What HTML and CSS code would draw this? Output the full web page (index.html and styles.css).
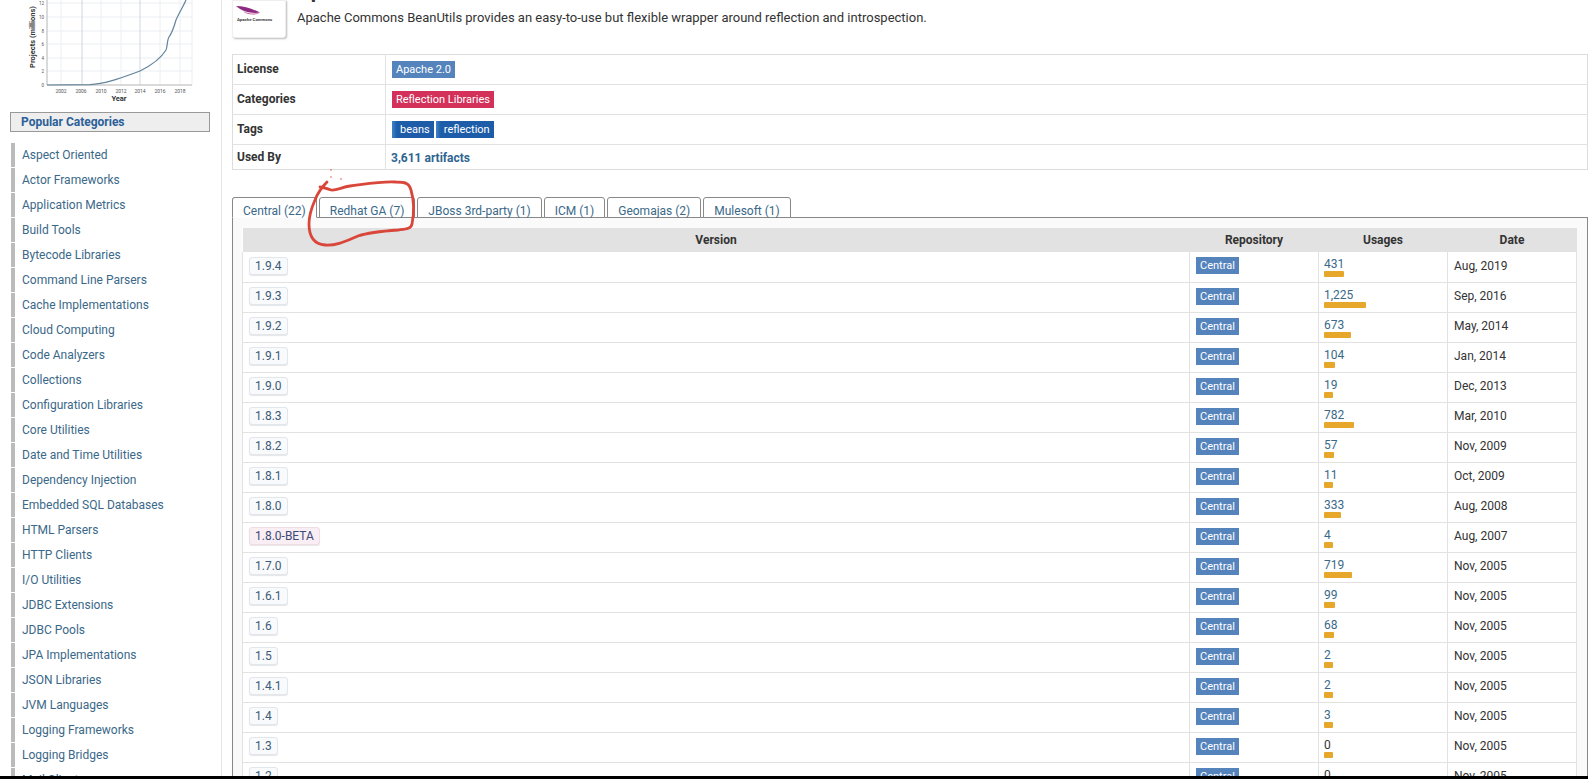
FILE: index.html
```html
<!DOCTYPE html>
<html lang="en">
<head>
<meta charset="utf-8">
<title>Apache Commons BeanUtils</title>
<link rel="stylesheet" href="styles.css">
</head>
<body>
<div class="page">
  <aside class="sidebar">
    <svg class="chart" width="200" height="104" viewBox="0 0 200 104">
      <g class="grid">
        <path d="M47 71H192M47 58H192M47 44H192M47 31H192M47 17H192M47 3H192M61 0V85M101 0V85M121 0V85M160 0V85M180 0V85M192 0V85"/>
      </g>
      <g class="grid-dark"><path d="M82 0V85M140 0V85"/></g>
      <path class="axis" d="M47 0V85H192"/>
      <path class="curve" d="M47 85L90 84.6C105 84 118 79 140 71C150 66 160 60 166 50C167.5 47 167 40 169 37C172 33 174 27 176 20C179 13 183 7 186 0"/>
      <g class="ticks">
        <text x="44" y="87">0</text><text x="44" y="73">2</text><text x="44" y="60">4</text><text x="44" y="46">6</text><text x="44" y="33">8</text><text x="44" y="19">10</text><text x="44" y="5">12</text>
      </g>
      <g class="years">
        <text x="61" y="93">2002</text><text x="81" y="93">2006</text><text x="101" y="93">2010</text><text x="121" y="93">2012</text><text x="140" y="93">2014</text><text x="160" y="93">2016</text><text x="180" y="93">2018</text>
      </g>
      <text class="axis-title" x="119" y="101">Year</text>
      <text class="axis-title" transform="translate(34.5 37) rotate(-90)">Projects (millions)</text>
    </svg>
    <h2 class="side-title">Popular Categories</h2>
    <ul class="side-list">
      <li><a>Aspect Oriented</a></li>
      <li><a>Actor Frameworks</a></li>
      <li><a>Application Metrics</a></li>
      <li><a>Build Tools</a></li>
      <li><a>Bytecode Libraries</a></li>
      <li><a>Command Line Parsers</a></li>
      <li><a>Cache Implementations</a></li>
      <li><a>Cloud Computing</a></li>
      <li><a>Code Analyzers</a></li>
      <li><a>Collections</a></li>
      <li><a>Configuration Libraries</a></li>
      <li><a>Core Utilities</a></li>
      <li><a>Date and Time Utilities</a></li>
      <li><a>Dependency Injection</a></li>
      <li><a>Embedded SQL Databases</a></li>
      <li><a>HTML Parsers</a></li>
      <li><a>HTTP Clients</a></li>
      <li><a>I/O Utilities</a></li>
      <li><a>JDBC Extensions</a></li>
      <li><a>JDBC Pools</a></li>
      <li><a>JPA Implementations</a></li>
      <li><a>JSON Libraries</a></li>
      <li><a>JVM Languages</a></li>
      <li><a>Logging Frameworks</a></li>
      <li><a>Logging Bridges</a></li>
      <li><a>Mail Clients</a></li>
    </ul>
  </aside>

  <main class="main">
    <header class="head">
      <div class="logo-card">
        <svg class="logo" width="40" height="20" viewBox="0 0 40 20">
          <path class="logo-feather" d="M1 1C9 1 18 4 25 7.5C17 9 7 6.5 1 1Z"/>
          <path class="logo-feather2" d="M8 6.5C13 8.5 20 9.5 25 7.5C20 11 12 9.5 8 6.5Z"/>
          <text class="logo-text" x="2" y="15.5">Apache Commons</text>
        </svg>
      </div>
      <div class="head-text">
        <h1 class="title">Apache Commons BeanUtils</h1>
        <p class="desc">Apache Commons BeanUtils provides an easy-to-use but flexible wrapper around reflection and introspection.</p>
      </div>
    </header>

    <table class="info">
      <tr class="info-row"><th>License</th><td><span class="badge b-blue">Apache 2.0</span></td></tr>
      <tr class="info-row"><th>Categories</th><td><span class="badge b-red">Reflection Libraries</span></td></tr>
      <tr class="info-row"><th>Tags</th><td class="tags"><span class="tag">beans</span><span class="tag">reflection</span></td></tr>
      <tr class="info-row short"><th>Used By</th><td><a class="strong-link">3,611 artifacts</a></td></tr>
    </table>

    <nav class="tabs">
      <a class="tab active">Central (22)</a>
      <a class="tab">Redhat GA (7)</a>
      <a class="tab">JBoss 3rd-party (1)</a>
      <a class="tab">ICM (1)</a>
      <a class="tab">Geomajas (2)</a>
      <a class="tab">Mulesoft (1)</a>
    </nav>

    <section class="panel">
      <table class="versions">
        <colgroup><col><col class="col"><col class="col"><col class="col"></colgroup>
        <thead><tr><th>Version</th><th>Repository</th><th>Usages</th><th>Date</th></tr></thead>
        <tbody>
          <tr><td><a class="ver">1.9.4</a></td><td><span class="badge b-blue">Central</span></td><td class="usage"><a class="num">431</a><i class="bar" style="width:20px"></i></td><td>Aug, 2019</td></tr>
          <tr><td><a class="ver">1.9.3</a></td><td><span class="badge b-blue">Central</span></td><td class="usage"><a class="num">1,225</a><i class="bar" style="width:42px"></i></td><td>Sep, 2016</td></tr>
          <tr><td><a class="ver">1.9.2</a></td><td><span class="badge b-blue">Central</span></td><td class="usage"><a class="num">673</a><i class="bar" style="width:27px"></i></td><td>May, 2014</td></tr>
          <tr><td><a class="ver">1.9.1</a></td><td><span class="badge b-blue">Central</span></td><td class="usage"><a class="num">104</a><i class="bar" style="width:11px"></i></td><td>Jan, 2014</td></tr>
          <tr><td><a class="ver">1.9.0</a></td><td><span class="badge b-blue">Central</span></td><td class="usage"><a class="num">19</a><i class="bar" style="width:9px"></i></td><td>Dec, 2013</td></tr>
          <tr><td><a class="ver">1.8.3</a></td><td><span class="badge b-blue">Central</span></td><td class="usage"><a class="num">782</a><i class="bar" style="width:30px"></i></td><td>Mar, 2010</td></tr>
          <tr><td><a class="ver">1.8.2</a></td><td><span class="badge b-blue">Central</span></td><td class="usage"><a class="num">57</a><i class="bar" style="width:10px"></i></td><td>Nov, 2009</td></tr>
          <tr><td><a class="ver">1.8.1</a></td><td><span class="badge b-blue">Central</span></td><td class="usage"><a class="num">11</a><i class="bar" style="width:9px"></i></td><td>Oct, 2009</td></tr>
          <tr><td><a class="ver">1.8.0</a></td><td><span class="badge b-blue">Central</span></td><td class="usage"><a class="num">333</a><i class="bar" style="width:17px"></i></td><td>Aug, 2008</td></tr>
          <tr><td><a class="ver beta">1.8.0-BETA</a></td><td><span class="badge b-blue">Central</span></td><td class="usage"><a class="num">4</a><i class="bar" style="width:9px"></i></td><td>Aug, 2007</td></tr>
          <tr><td><a class="ver">1.7.0</a></td><td><span class="badge b-blue">Central</span></td><td class="usage"><a class="num">719</a><i class="bar" style="width:28px"></i></td><td>Nov, 2005</td></tr>
          <tr><td><a class="ver">1.6.1</a></td><td><span class="badge b-blue">Central</span></td><td class="usage"><a class="num">99</a><i class="bar" style="width:11px"></i></td><td>Nov, 2005</td></tr>
          <tr><td><a class="ver">1.6</a></td><td><span class="badge b-blue">Central</span></td><td class="usage"><a class="num">68</a><i class="bar" style="width:10px"></i></td><td>Nov, 2005</td></tr>
          <tr><td><a class="ver">1.5</a></td><td><span class="badge b-blue">Central</span></td><td class="usage"><a class="num">2</a><i class="bar" style="width:9px"></i></td><td>Nov, 2005</td></tr>
          <tr><td><a class="ver">1.4.1</a></td><td><span class="badge b-blue">Central</span></td><td class="usage"><a class="num">2</a><i class="bar" style="width:9px"></i></td><td>Nov, 2005</td></tr>
          <tr><td><a class="ver">1.4</a></td><td><span class="badge b-blue">Central</span></td><td class="usage"><a class="num">3</a><i class="bar" style="width:9px"></i></td><td>Nov, 2005</td></tr>
          <tr><td><a class="ver">1.3</a></td><td><span class="badge b-blue">Central</span></td><td class="usage"><span class="num zero">0</span><i class="bar" style="width:9px"></i></td><td>Nov, 2005</td></tr>
          <tr><td><a class="ver">1.2</a></td><td><span class="badge b-blue">Central</span></td><td class="usage"><span class="num zero">0</span><i class="bar" style="width:9px"></i></td><td>Nov, 2005</td></tr>
        </tbody>
      </table>
    </section>
  </main>

  <svg class="scribble" width="1588" height="779" viewBox="0 0 1588 779">
    <path class="scribble-line" d="M327 182C322 187 318 192 315 200C311 209 309 216 309 224C309 236 313 244 325 245C336 246 346 241 358 236C370 232 384 231 398 230C406 229 411 229 412 224C414 214 414 200 411 190C409 183 405 182 396 182C382 181 366 184 350 186C342 187 336 191 331 190C327 189 324 187 320 187"/>
    <circle class="scribble-dot" cx="331" cy="170" r="0.8"/>
    <circle class="scribble-dot" cx="331" cy="177" r="0.8"/>
    <circle class="scribble-dot" cx="341" cy="179" r="0.8"/>
  </svg>
</div>
<div class="strip"></div>
</body>
</html>
```
FILE: styles.css
```css
* { box-sizing: border-box; }
html, body { height: 100%; }
body {
  margin: 0;
  display: flex;
  flex-direction: column;
  overflow: hidden;
  background: #fff;
  color: #333;
  font-family: Roboto, "Liberation Sans", sans-serif;
  font-size: 13px;
}
a { color: #3a6888; text-decoration: none; }

.page {
  position: relative;
  flex: 1;
  min-height: 0;
  overflow: hidden;
  display: grid;
  grid-template-columns: 222px 1fr;
}
.strip { height: 3px; background: #000; flex: none; }

/* sidebar */
.sidebar {
  border-right: 1px solid #e6e6e6;
  padding-left: 10px;
  overflow: hidden;
}
.chart { display: block; margin: 0 0 8px -10px; }
.grid path { stroke: #eceef2; fill: none; }
.grid-dark path { stroke: #d0d6e0; fill: none; }
.axis { stroke: #b5b5b5; fill: none; }
.curve { stroke: #62849c; stroke-width: 1.2; fill: none; }
.ticks text { font-size: 4.5px; text-anchor: end; fill: #555; }
.years text { font-size: 5px; text-anchor: middle; fill: #555; }
.axis-title { font-size: 7.5px; font-weight: 700; text-anchor: middle; fill: #333; }
.side-title {
  margin: 0 0 11px;
  width: 200px;
  height: 20px;
  line-height: 18px;
  padding-left: 10px;
  background: #eee;
  border: 1px solid #999;
  color: #2b6099;
  font-size: 12px;
  font-weight: 700;
}
.side-list { list-style: none; margin: 0 0 0 1px; padding: 0; font-size: 12px; }
.side-list li {
  height: 24px;
  margin-bottom: 1px;
  border-left: 4px solid #bbb;
  padding-left: 7px;
  line-height: 24px;
}

/* main */
.main { padding-left: 10px; overflow: hidden; min-width: 0; }
.head { display: flex; height: 38px; }
.logo-card {
  width: 54px;
  height: 38px;
  background: #fff;
  border: 1px solid #eee;
  border-radius: 0 0 3px 3px;
  box-shadow: 1px 1px 2px #bbb;
  padding: 4px 0 0 2px;
  flex: none;
}
.logo { display: block; }
.logo-feather { fill: #8f2a82; }
.logo-feather2 { fill: #c65a9f; }
.logo-text { font-size: 4.3px; font-weight: 700; fill: #444; }
.head-text { margin-left: 11px; min-width: 0; height: 38px; }
.title {
  margin: -22px 0 0;
  height: 27px;
  line-height: 27px;
  font-size: 21px;
  font-weight: 700;
  color: #333;
  white-space: nowrap;
}
.desc { margin: 4px 0 0; font-size: 13px; line-height: 18px; white-space: nowrap; }

.info {
  width: 100%;
  margin-top: 16px;
  border-collapse: collapse;
  border: 1px solid #ddd;
}
.info-row { height: 30px; border-bottom: 1px solid #e2e2e2; }
.info-row.short { height: 25px; border-bottom: 0; }
.info th {
  width: 153px;
  padding: 0 0 2px 4px;
  text-align: left;
  font-weight: 700;
  font-size: 12px;
  border-right: 1px solid #e2e2e2;
}
.info-row.short th { padding-bottom: 0; }
.info td { padding: 0 0 0 6px; }
.badge {
  display: inline-block;
  height: 17px;
  line-height: 17px;
  padding: 0 4px;
  font-size: 11px;
  color: #fff;
  vertical-align: middle;
}
.b-blue { background: #5583bc; }
.b-red { background: #d3305a; }
.tag {
  display: inline-block;
  height: 17px;
  line-height: 17px;
  padding: 0 4px 0 8px;
  margin-right: 2px;
  color: #fff;
  font-size: 11px;
  background: linear-gradient(90deg, #3f83c9 0, #1d5ca8 5px);
  vertical-align: middle;
}
.strong-link { font-weight: 700; font-size: 12px; color: #2f6590; margin-left: -1px; }

.tabs { display: flex; gap: 2px; margin-top: 27px; height: 21px; position: relative; z-index: 1; }
.tab {
  height: 21px;
  line-height: 19px;
  padding: 4px 10px 0;
  border: 1px solid #888;
  border-radius: 3px 3px 0 0;
  font-size: 12px;
  background: #fff;
}
.tab.active { border-bottom-color: #fff; }
.panel {
  border: 1px solid #888;
  margin-top: -1px;
  padding: 10px 10px 10px 9px;
  background: #fafafa;
}
.versions { width: 100%; table-layout: fixed; border-collapse: collapse; background: #fff; }
.col { width: 129px; }
.versions th {
  height: 24px;
  padding: 0;
  background: #e2e2e2;
  font-size: 12px;
  font-weight: 700;
  text-align: center;
}
.versions td {
  height: 30px;
  padding: 0 0 2px 6px;
  border: 1px solid #e2e2e2;
  border-top: 0;
  font-size: 12px;
  vertical-align: middle;
}
.versions td.usage { padding-left: 5px; }
.ver {
  display: inline-block;
  height: 18px;
  line-height: 16px;
  padding: 0 5px;
  border: 1px solid #e2e7ee;
  border-radius: 3px;
  background: #f8fafc;
  box-shadow: 0 1px 1px #e6e6e6;
  color: #3d5a78;
  font-size: 12px;
}
.ver.beta { background: #f8eef3; border-color: #efdde5; color: #3b4a78; }
.num { display: block; padding-top: 4px; line-height: 12px; color: #3a6888; font-size: 12px; }
.num.zero { color: #333; }
.bar { display: block; height: 6px; margin-top: 1px; background: #e6a72a; border-radius: 1px; }

/* hand-drawn annotation over the page */
.scribble { position: absolute; left: 0; top: 0; pointer-events: none; z-index: 5; }
.scribble-line { fill: none; stroke: #d9463a; stroke-width: 2.8; stroke-linecap: round; stroke-linejoin: round; }
.scribble-dot { fill: #e0574a; }
```
